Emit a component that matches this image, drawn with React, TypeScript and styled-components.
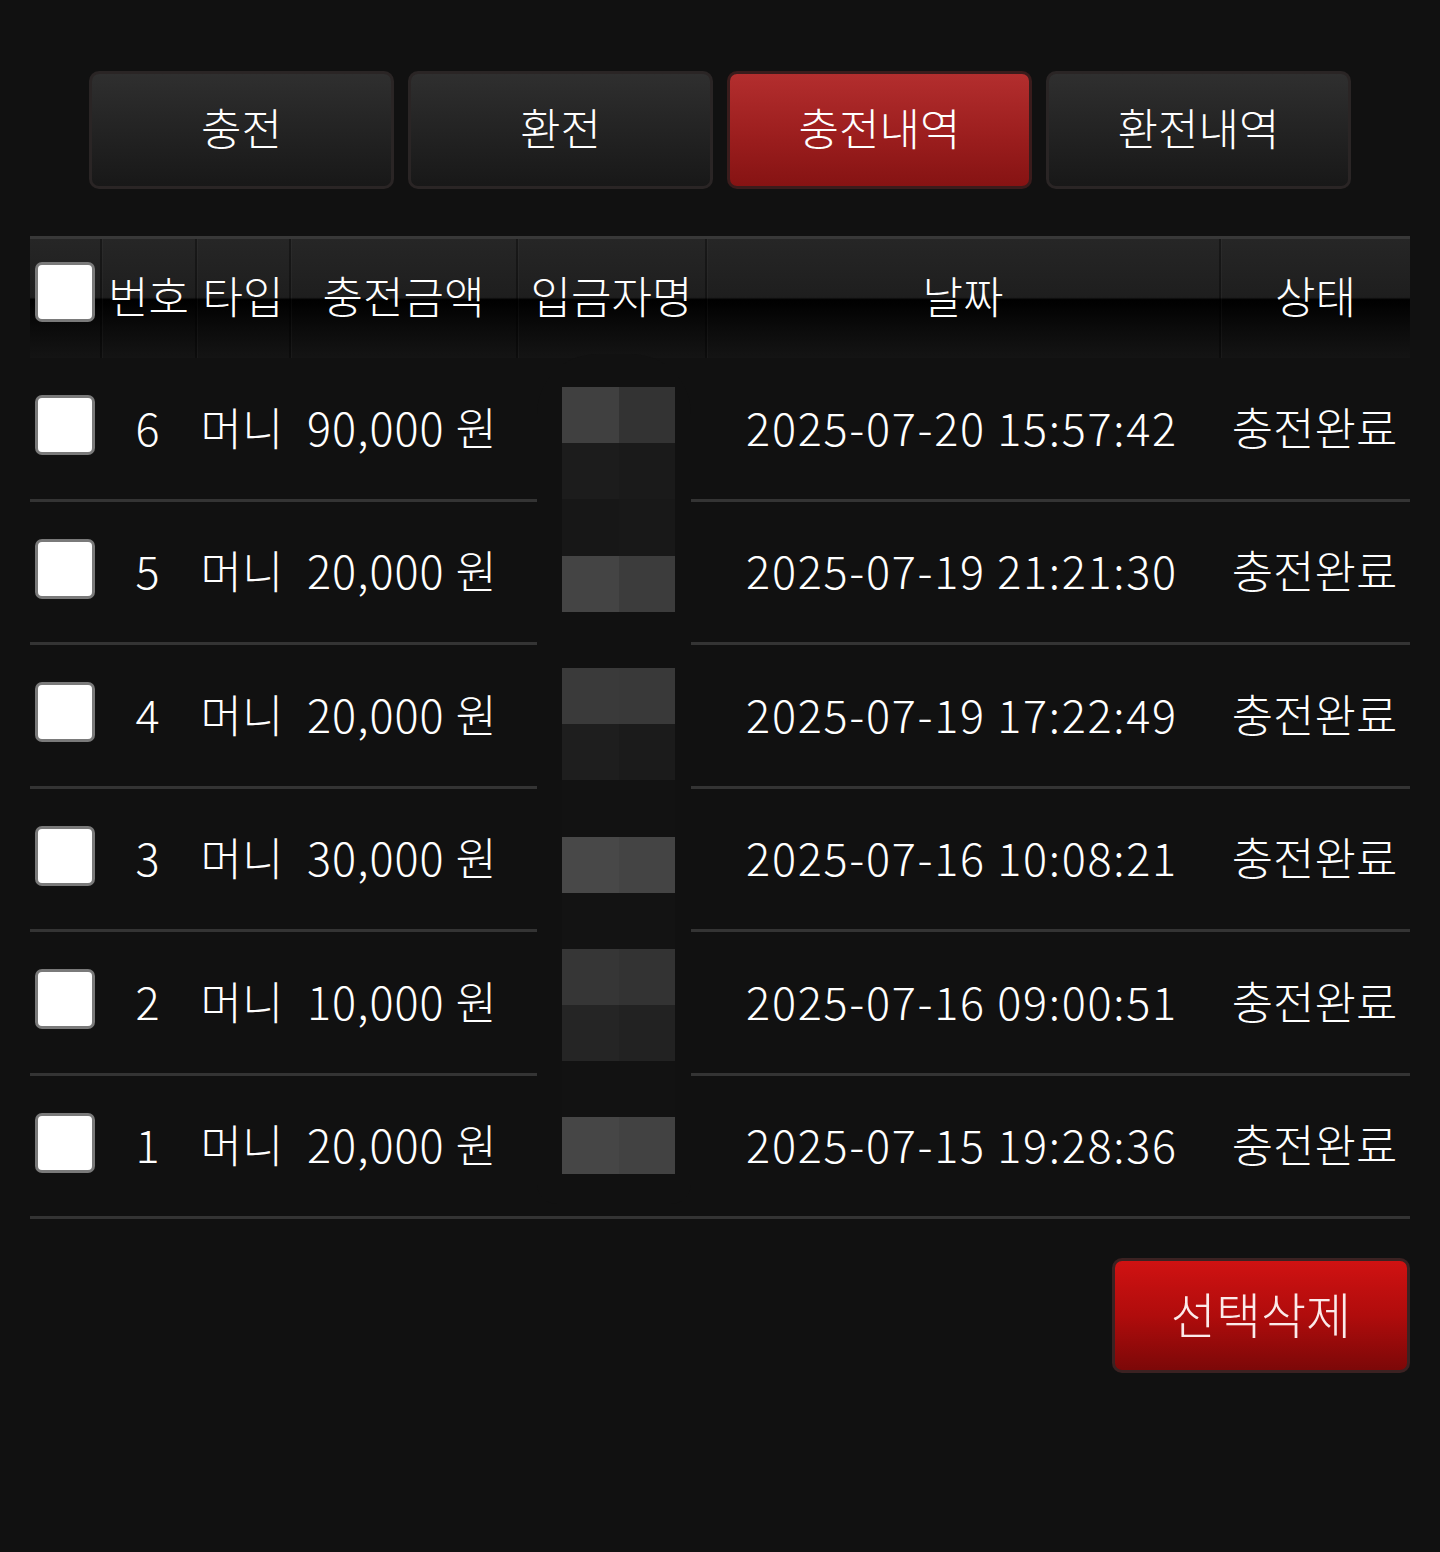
import React, { FC } from "react";
import styled, { createGlobalStyle } from "styled-components";

const GlobalStyle = createGlobalStyle`
  html, body {
    margin: 0;
    padding: 0;
    background: #111111;
  }
  body {
    font-family: "Noto Sans CJK KR", "Noto Sans", sans-serif;
    font-weight: 300;
    color: #ffffff;
  }
`;

const Page = styled.div`
  min-height: 1552px;
  background: #111111;
  padding: 71px 30px 0;
  box-sizing: border-box;
`;

const TabBar = styled.div`
  display: grid;
  grid-template-columns: repeat(4, 305px);
  gap: 14px;
  justify-content: center;
`;

const Tab = styled.button<{ $active?: boolean }>`
  height: 118px;
  border-radius: 10px;
  border: 3px solid ${(p) => (p.$active ? "#3a1c1c" : "#2a2525")};
  background: ${(p) =>
    p.$active
      ? "linear-gradient(to bottom, #b32e2e 0%, #9c1e1e 55%, #861313 100%)"
      : "linear-gradient(to bottom, #2f2f2f 0%, #222222 55%, #181818 100%)"};
  color: #ffffff;
  font-family: "Noto Sans CJK KR", sans-serif;
  font-size: 44px;
  font-weight: 300;
  padding: 0 0 6px;
  cursor: pointer;
`;

const TableWrap = styled.div`
  position: relative;
  margin-top: 47px;
`;

const COLS = "70px 95px 94px 227px 189px 514px 191px";

const HeaderRow = styled.div`
  display: grid;
  grid-template-columns: ${COLS};
  height: 122px;
  border-top: 3px solid #383838;
  box-sizing: border-box;
  background: linear-gradient(
    to bottom,
    #262626 0%,
    #1e1e1e 49%,
    #000000 51%,
    #0b0b0b 75%,
    #141414 100%
  );
`;

const HeadCell = styled.div`
  display: flex;
  align-items: center;
  justify-content: center;
  font-size: 44px;
  white-space: nowrap;
  padding-bottom: 8px;
  border-left: 2px solid rgba(0, 0, 0, 0.35);
  box-shadow: inset 1px 0 0 rgba(255, 255, 255, 0.03);
`;

const Row = styled.div`
  display: grid;
  grid-template-columns: ${COLS};
  height: 143.5px;
  box-sizing: border-box;
  border-bottom: 3px solid #343434;
`;

const Cell = styled.div<{ $spacing?: number }>`
  display: flex;
  align-items: center;
  justify-content: center;
  font-size: 45px;
  letter-spacing: ${(p) => p.$spacing ?? 0}px;
  white-space: nowrap;
  padding-bottom: 4px;
`;

const Check = styled.input.attrs({ type: "checkbox" })`
  appearance: none;
  margin: 0;
  width: 60px;
  height: 60px;
  box-sizing: border-box;
  background: #ffffff;
  border: 3px solid #7a7a7a;
  border-radius: 7px;
  cursor: pointer;
`;

const CheckCell = styled.div<{ $offset?: number }>`
  display: flex;
  align-items: center;
  justify-content: flex-start;
  padding-left: 5px;
  padding-bottom: ${(p) => p.$offset ?? 0}px;
`;

/* pixelated name mask lying over the name column */
const MaskBackdrop = styled.div`
  position: absolute;
  left: 507px;
  width: 154px;
  top: 118px;
  height: 850px;
  background: #111111;
  border-radius: 60px 60px 20px 20px;
`;

const Mosaic = styled.div`
  position: absolute;
  left: 532px;
  top: 151px;
  display: grid;
  grid-template-columns: 57px 56px;
  grid-auto-rows: 56.2px;
`;

const Tile = styled.div<{ $c: string }>`
  background: ${(p) => p.$c};
`;

const Footer = styled.div`
  display: flex;
  justify-content: flex-end;
  margin-top: 39px;
`;

const DeleteButton = styled.button`
  width: 298px;
  height: 115px;
  border-radius: 10px;
  border: 3px solid #3b2222;
  background: linear-gradient(to bottom, #d01212 0%, #b00c0c 50%, #7c0808 100%);
  color: #fbeaea;
  font-family: "Noto Sans CJK KR", sans-serif;
  font-size: 49px;
  font-weight: 300;
  padding: 0 0 6px;
  cursor: pointer;
`;

const tabs = ["충전", "환전", "충전내역", "환전내역"];

const rows = [
  { no: 6, amount: "90,000 원", date: "2025-07-20 15:57:42" },
  { no: 5, amount: "20,000 원", date: "2025-07-19 21:21:30" },
  { no: 4, amount: "20,000 원", date: "2025-07-19 17:22:49" },
  { no: 3, amount: "30,000 원", date: "2025-07-16 10:08:21" },
  { no: 2, amount: "10,000 원", date: "2025-07-16 09:00:51" },
  { no: 1, amount: "20,000 원", date: "2025-07-15 19:28:36" },
];

const mosaic = [
  ["#404040", "#333333"],
  ["#1c1c1c", "#1a1a1a"],
  ["#171717", "#181818"],
  ["#444444", "#3c3c3c"],
  ["#111111", "#111111"],
  ["#3a3a3a", "#393939"],
  ["#1e1e1e", "#1b1b1b"],
  ["#121212", "#121212"],
  ["#484848", "#444444"],
  ["#131313", "#131313"],
  ["#363636", "#333333"],
  ["#252525", "#222222"],
  ["#121212", "#121212"],
  ["#464646", "#424242"],
];

const App: FC = () => {
  const [active, setActive] = React.useState(2);
  const [checked, setChecked] = React.useState<number[]>([]);

  const toggle = (no: number) =>
    setChecked((c) => (c.includes(no) ? c.filter((n) => n !== no) : [...c, no]));

  return (
    <Page>
      <GlobalStyle />
      <TabBar>
        {tabs.map((t, i) => (
          <Tab key={t} $active={i === active} onClick={() => setActive(i)}>
            {t}
          </Tab>
        ))}
      </TabBar>

      <TableWrap>
        <HeaderRow>
          <CheckCell $offset={14}>
            <Check
              checked={checked.length === rows.length}
              onChange={() =>
                setChecked(checked.length === rows.length ? [] : rows.map((r) => r.no))
              }
            />
          </CheckCell>
          <HeadCell>번호</HeadCell>
          <HeadCell>타입</HeadCell>
          <HeadCell>충전금액</HeadCell>
          <HeadCell>입금자명</HeadCell>
          <HeadCell>날짜</HeadCell>
          <HeadCell>상태</HeadCell>
        </HeaderRow>

        {rows.map((r) => (
          <Row key={r.no}>
            <CheckCell $offset={6}>
              <Check checked={checked.includes(r.no)} onChange={() => toggle(r.no)} />
            </CheckCell>
            <Cell>{r.no}</Cell>
            <Cell>머니</Cell>
            <Cell $spacing={1}>{r.amount}</Cell>
            <Cell />
            <Cell $spacing={1.7}>{r.date}</Cell>
            <Cell>충전완료</Cell>
          </Row>
        ))}

        <MaskBackdrop />
        <Mosaic>
          {mosaic.map((pair, i) =>
            pair.map((c, j) => <Tile key={`${i}-${j}`} $c={c} />)
          )}
        </Mosaic>
      </TableWrap>

      <Footer>
        <DeleteButton>선택삭제</DeleteButton>
      </Footer>
    </Page>
  );
};

export default App;
